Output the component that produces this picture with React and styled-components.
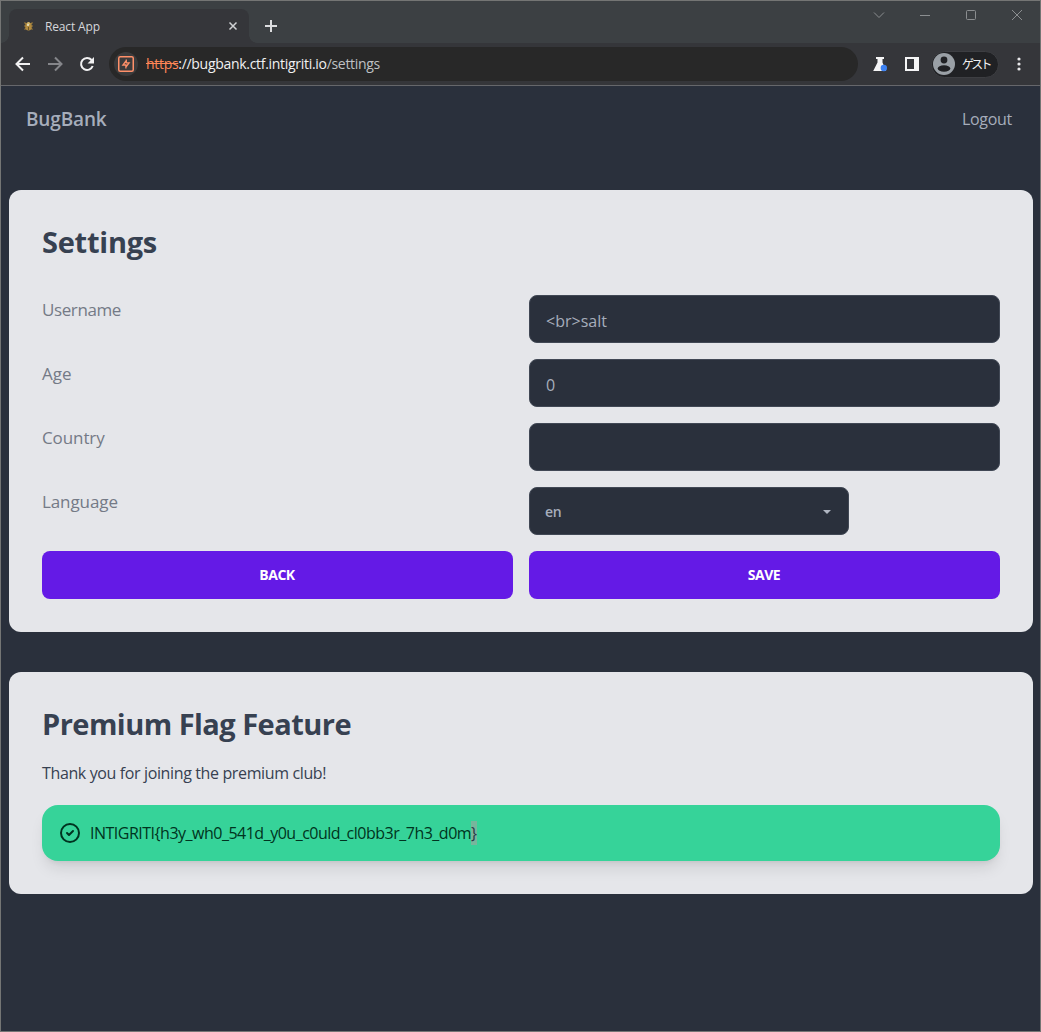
import React from 'react';
import styled, { createGlobalStyle } from 'styled-components';

const Global = createGlobalStyle`
  *, *::before, *::after { box-sizing: border-box; }
  body { margin: 0; background: #2a303c; }
  input, select, button { font: inherit; margin: 0; }
`;

const Frame = styled.div`
  display: flex;
  flex-direction: column;
  width: 100%;
  height: 1032px;
  border: 1px solid #747574;
  background: #2a303c;
  font-family: 'Open Sans', 'Noto Sans', 'Noto Sans CJK JP', sans-serif;
  color: #a6adbb;
  overflow: hidden;
`;

const Text = styled.span`
  display: block;
  margin: 0;
  font-size: ${(p) => p.$size || 16}px;
  font-weight: ${(p) => p.$weight || 400};
  letter-spacing: ${(p) => p.$track || 0}px;
  line-height: ${(p) => p.$line || 24}px;
  color: ${(p) => p.$color || 'inherit'};
  white-space: nowrap;
`;

const TitleBar = styled.div`
  display: flex;
  flex: none;
  height: 42px;
  padding-top: 8px;
  background: #3c4043;
`;

const TabEdge = styled.div`
  align-self: flex-end;
  width: 8px;
  height: 8px;
  background: radial-gradient(circle at ${(p) => (p.$right ? '100% 0' : '0 0')}, #3c4043 7.5px, #35363a 8px);
`;

const Tab = styled.div`
  display: flex;
  align-items: center;
  width: 240px;
  padding: 0 10px 0 14px;
  border-radius: 8px 8px 0 0;
  background: #35363a;
  color: #d5d7da;
  svg { flex: none; }
`;

const TabTitle = styled(Text)`
  flex: 1;
  margin-left: 11px;
  padding-top: 2px;
`;

const NewTab = styled.div`
  width: 28px;
  height: 34px;
  display: grid;
  place-items: center;
`;

const WindowButtons = styled.div`
  display: flex;
  margin: -8px 0 0 auto;
  height: 28px;
`;

const WindowButton = styled.div`
  display: grid;
  place-items: center;
  width: 46px;
`;

const Toolbar = styled.div`
  display: flex;
  flex: none;
  align-items: center;
  height: 43px;
  padding: 0 12px 0 6px;
  background: #35363a;
  border-bottom: 1px solid #66676b;
`;

const ToolButton = styled.div`
  display: grid;
  place-items: center;
  width: 32px;
  height: 32px;
`;

const AddressBar = styled.div`
  display: flex;
  flex: 1;
  align-items: center;
  height: 34px;
  margin: 0 6px;
  padding-left: 5px;
  border-radius: 17px;
  background: #282828;
`;

const SiteBadge = styled.div`
  display: grid;
  place-items: center;
  width: 24px;
  height: 24px;
  margin-right: 8px;
  border-radius: 50%;
  background: #3b3b3c;
`;

const Scheme = styled.span`
  color: #ff8657;
  text-decoration: line-through;
`;

const Host = styled.span`
  color: #f1f1f2;
`;

const Profile = styled.div`
  display: flex;
  align-items: center;
  width: 68px;
  height: 27px;
  margin-left: 3px;
  padding-left: 1px;
  gap: 7px;
  border-radius: 14px;
  border: 1px solid #3d3e42;
  background: #202124;
`;

const ProfileName = styled(Text)`
  padding-top: 2px;
`;

const Menu = styled(ToolButton)`
  width: 18px;
  margin-left: 11px;
`;

const Page = styled.div`
  flex: 1;
  display: flex;
  flex-direction: column;
  padding: 0 7px 0 8px;
`;

const Navbar = styled.nav`
  display: flex;
  align-items: center;
  justify-content: space-between;
  height: 64px;
  padding: 2px 21px 0 17px;
  margin-bottom: 40px;
`;

const Card = styled.section`
  height: ${(p) => p.$height}px;
  margin-bottom: 40px;
  padding: 31px 33px;
  border-radius: 12px;
  background: #e5e6ea;
  color: #374151;
`;

const Thanks = styled(Text)`
  margin-top: 17px;
`;

const Form = styled.form`
  display: grid;
  grid-template-columns: 1fr 1fr;
  grid-auto-rows: 48px;
  gap: 16px;
  margin-top: 33px;
`;

const Label = styled(Text).attrs({ as: 'label', $size: 17, $line: 29, $color: '#747a86' })``;

const Input = styled.input`
  width: 100%;
  height: 48px;
  padding: 3px 16px 0;
  border: 1px solid #414855;
  border-radius: 8px;
  outline: none;
  background: #2a303c;
  color: #a6adbb;
  font-size: 16px;
`;

const SelectBox = styled.div`
  display: flex;
  align-items: center;
  justify-content: space-between;
  width: 320px;
  height: 48px;
  padding: 1px 17px 0 15px;
  border: 1px solid #414855;
  border-radius: 8px;
  background: #2a303c;
  color: #a6adbb;
`;

const Button = styled.button`
  height: 48px;
  padding: 0 1px 2px 0;
  border: 0;
  border-radius: 8px;
  background: #641ae6;
  color: #fff;
  font-size: 14px;
  font-weight: 700;
  letter-spacing: -0.5px;
`;

const Alert = styled.div`
  display: flex;
  align-items: center;
  height: 56px;
  margin-top: 20px;
  padding: 0 16px;
  gap: 8px;
  border-radius: 16px;
  background: #36d399;
  color: #003320;
  box-shadow: 0 10px 15px -3px rgba(0, 0, 0, 0.1), 0 4px 6px -4px rgba(0, 0, 0, 0.1);
`;

const Selected = styled.span`
  display: inline-block;
  background: #77b69c;
  color: #2b3547;
`;

const Beetle = () => (
  <svg width="11" height="12" viewBox="0 0 11 12">
    <path d="M1.500 2.500l2 2M9.500 2.500l-2 2M1 6h2M10 6H8M1.500 9.500l2-1.500M9.500 9.500l-2-1.500" stroke="#9a7a3c" strokeWidth="1.2" />
    <ellipse cx="5.500" cy="6.500" rx="3.300" ry="4" fill="#b18a3e" />
    <circle cx="5.500" cy="3.500" r="1.600" fill="#d0b56d" />
    <path d="M5.500 7v3" stroke="#6b542a" strokeWidth="1" />
    <circle cx="5" cy="5" r="1.100" fill="#e8e2c6" />
  </svg>
);

const Arrow = ({ color, forward }) => (
  <svg width="16" height="16" viewBox="0 0 16 16" fill="none" stroke={color} strokeWidth="2">
    <path d={forward ? 'M1 8h13M8 1.5L14.5 8 8 14.5' : 'M15 8H2M8 1.5L1.5 8 8 14.5'} />
  </svg>
);

const fields = [
  { label: 'Username', value: '<br>salt', track: -0.4 },
  { label: 'Age', value: '0', track: 0 },
  { label: 'Country', value: '', track: -0.1 },
];

export default function App() {
  return (
    <Frame>
      <Global />
      <TitleBar>
        <TabEdge />
        <Tab>
          <Beetle />
          <TabTitle $size={12} $track={-0.15}>React App</TabTitle>
          <svg width="12" height="12" viewBox="0 0 12 12" stroke="#d0d2d4" strokeWidth="1.5">
            <path d="M2.5 2.5l7 7M9.5 2.5l-7 7" />
          </svg>
        </Tab>
        <TabEdge $right />
        <NewTab>
          <svg width="12" height="12" viewBox="0 0 12 12" stroke="#dcdddf" strokeWidth="2">
            <path d="M6 0v12M0 6h12" />
          </svg>
        </NewTab>
        <WindowButtons>
          <WindowButton>
            <svg width="12" height="12" viewBox="0 0 12 12" fill="none" stroke="#8b8e90"><path d="M1 3.5l5 5 5-5" /></svg>
          </WindowButton>
          <WindowButton>
            <svg width="12" height="12" viewBox="0 0 12 12" stroke="#8b8e90"><path d="M1 6.5h10" /></svg>
          </WindowButton>
          <WindowButton>
            <svg width="12" height="12" viewBox="0 0 12 12" fill="none" stroke="#8b8e90"><rect x="1.5" y="1.5" width="9" height="9" rx="1" /></svg>
          </WindowButton>
          <WindowButton>
            <svg width="12" height="12" viewBox="0 0 12 12" stroke="#8b8e90"><path d="M1 1l10 10M11 1L1 11" /></svg>
          </WindowButton>
        </WindowButtons>
      </TitleBar>

      <Toolbar>
        <ToolButton><Arrow color="#f1f1f2" /></ToolButton>
        <ToolButton><Arrow color="#85868a" forward /></ToolButton>
        <ToolButton>
          <svg width="16" height="16" viewBox="0 0 16 16">
            <path d="M13.700 10A6 6 0 1 1 12.600 4" fill="none" stroke="#f1f1f2" strokeWidth="2" />
            <path d="M15 1v6.500H8.500z" fill="#f1f1f2" />
          </svg>
        </ToolButton>
        <AddressBar>
          <SiteBadge>
            <svg width="16" height="16" viewBox="0 0 16 16" fill="none" stroke="#ff9069">
              <rect x=".75" y=".75" width="14.5" height="14.5" rx="1.5" strokeWidth="1.5" />
              <path d="M8.300 3.500v3.300h2.800L8.300 10.500M7.900 12.500V9H4.900L8 5" strokeWidth="1.300" />
            </svg>
          </SiteBadge>
          <Text $size={14} $track={-0.3} $color="#bfc1c4">
            <Scheme>https</Scheme><Host>://bugbank.ctf.intigriti.io</Host>/settings
          </Text>
        </AddressBar>
        <ToolButton>
          <svg width="16" height="16" viewBox="0 0 16 16">
            <path d="M4 1h8v2h-1.500v3.500L14 15H1.200L5.500 6.500V3H4z" fill="#f5f5f6" />
            <circle cx="11.800" cy="12" r="3.200" fill="#3d82f3" />
          </svg>
        </ToolButton>
        <ToolButton>
          <svg width="14" height="14" viewBox="0 0 14 14">
            <path d="M0 0h14v14H0zM2 2v10h7V2z" fill="#f5f5f6" fillRule="evenodd" />
          </svg>
        </ToolButton>
        <Profile>
          <svg width="22" height="22" viewBox="0 0 22 22">
            <circle cx="11" cy="11" r="11" fill="#9aa0a6" />
            <circle cx="11" cy="7" r="3.400" fill="#202124" />
            <ellipse cx="11" cy="15.500" rx="6.300" ry="3.300" fill="#202124" />
          </svg>
          <ProfileName $size={12} $track={-2.8} $color="#f1f1f2">ゲスト</ProfileName>
        </Profile>
        <Menu>
          <svg width="4" height="14" viewBox="0 0 4 14" fill="#e8e8ea">
            <circle cx="2" cy="2" r="1.600" /><circle cx="2" cy="7" r="1.600" /><circle cx="2" cy="12" r="1.600" />
          </svg>
        </Menu>
      </Toolbar>

      <Page>
        <Navbar>
          <Text $size={19} $weight={600} $track={-0.15}>BugBank</Text>
          <Text $size={16} $track={-0.3}>Logout</Text>
        </Navbar>
        <Card $height={442}>
          <Text as="h1" $size={29} $weight={700} $track={-0.25} $line={41}>Settings</Text>
          <Form>
            {fields.map((f) => (
              <React.Fragment key={f.label}>
                <Label $track={f.track}>{f.label}</Label>
                <Input defaultValue={f.value} />
              </React.Fragment>
            ))}
            <Label $track={-0.1}>Language</Label>
            <SelectBox>
              <Text $size={14} $weight={600} $track={-0.3}>en</Text>
              <svg width="8" height="4" viewBox="0 0 8 4"><path d="M0 0h8L4 4z" fill="#b0b6c2" /></svg>
            </SelectBox>
            <Button type="button">BACK</Button>
            <Button type="button">SAVE</Button>
          </Form>
        </Card>
        <Card $height={222}>
          <Text as="h1" $size={29} $weight={700} $track={-0.53} $line={41}>Premium Flag Feature</Text>
          <Thanks $size={16} $track={-0.37}>Thank you for joining the premium club!</Thanks>
          <Alert>
            <svg width="24" height="24" viewBox="0 0 24 24" fill="none" stroke="#003320" strokeWidth="2" strokeLinecap="round" strokeLinejoin="round">
              <path d="M9 12l2 2 4-4m6 2a9 9 0 11-18 0 9 9 0 0118 0z" />
            </svg>
            <Text $size={16} $track={-0.5}>
              INTIGRITI{'{'}h3y_wh0_541d_y0u_c0uld_cl0bb3r_7h3_d0m<Selected>{'}'}</Selected>
            </Text>
          </Alert>
        </Card>
      </Page>
    </Frame>
  );
}
